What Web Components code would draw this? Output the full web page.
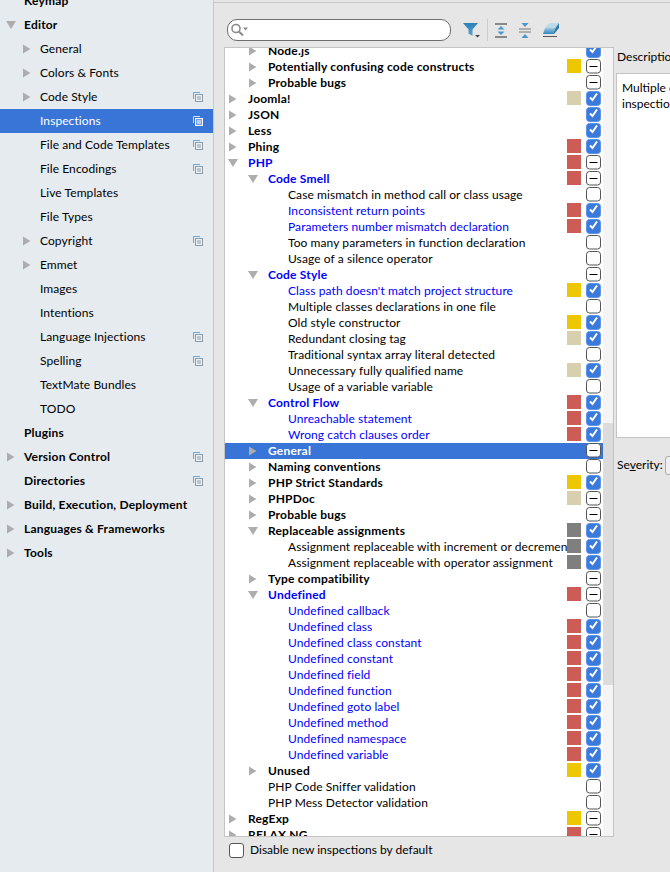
<!DOCTYPE html>
<html><head><meta charset="utf-8"><style>
html,body{margin:0;padding:0;height:872px;overflow:hidden;background:#e6e6e6}
</style></head><body>
<settings-app></settings-app>
<script>
const ARROW_R='<svg width="10" height="10" viewBox="0 0 10 10"><path d="M1 .5v9l7.500-4.500z" fill="#adadad"/></svg>';
const ARROW_D='<svg width="10" height="10" viewBox="0 0 10 10"><path d="M0 1h10l-5 8z" fill="#adadad"/></svg>';
const copyIcon=(sel)=>`<svg width="10" height="10" viewBox="0 0 10 10" fill="none"><path d="M.5 7V.5H7" stroke="${sel?'#cfe0f7':'#6aa7d6'}"/><rect x="2.500" y="2.500" width="7" height="7" fill="#fff" fill-opacity=".3" stroke="${sel?'#fff':'#8c9aa3'}"/><path d="M4 5h4M4 7h4" stroke="${sel?'#fff':'#8c9aa3'}"/></svg>`;

class NavRow extends HTMLElement{
  connectedCallback(){
    const d=+this.getAttribute('depth')||0,a=this.getAttribute('arrow'),b=this.hasAttribute('bold'),s=this.hasAttribute('selected'),c=this.hasAttribute('copy');
    this.attachShadow({mode:'open'}).innerHTML=`<style>
    :host{display:flex;align-items:center;height:24px;padding-left:${6+d*16}px;padding-right:10px;box-sizing:border-box;background:${s?'#3875d7':'transparent'};color:${s?'#fff':'#000'};font-weight:${b?700:400};letter-spacing:${b?'.2px':'.08px'}}
    .a{width:18px;display:flex}.t{flex:1;white-space:nowrap}.c{display:flex}</style>
    <span class="a">${a==='r'?ARROW_R:a==='d'?ARROW_D:''}</span><span class="t"><slot></slot></span><span class="c">${c?copyIcon(s):''}</span>`;
  }
}
customElements.define('nav-row',NavRow);

class SideBar extends HTMLElement{
  connectedCallback(){
    const R=[['Keymap',0,'',1,0],['Editor',0,'d',1,0],['General',1,'r'],['Colors & Fonts',1,'r'],['Code Style',1,'r',0,1],['Inspections',1,'',0,1,1],['File and Code Templates',1,'',0,1],['File Encodings',1,'',0,1],['Live Templates',1,''],['File Types',1,''],['Copyright',1,'r',0,1],['Emmet',1,'r'],['Images',1,''],['Intentions',1,''],['Language Injections',1,'',0,1],['Spelling',1,'',0,1],['TextMate Bundles',1,''],['TODO',1,''],['Plugins',0,'',1],['Version Control',0,'r',1,1],['Directories',0,'',1,1],['Build, Execution, Deployment',0,'r',1],['Languages & Frameworks',0,'r',1],['Tools',0,'r',1]];
    const s=this.attachShadow({mode:'open'});
    s.innerHTML=`<style>:host{display:block;width:214px;flex:none;height:872px;box-sizing:border-box;background:#e6ebf0;border-right:1px solid #c9c9c9;overflow:hidden}
    .w{margin-top:-11px}</style><div class="w">${R.map(r=>`<nav-row depth="${r[1]}" arrow="${r[2]||''}" ${r[3]?'bold':''} ${r[4]?'copy':''} ${r[5]?'selected':''}>${r[0].replace('&','&amp;')}</nav-row>`).join('')}</div>`;
  }
}
customElements.define('side-bar',SideBar);

class CheckBox extends HTMLElement{
  connectedCallback(){
    const k=this.getAttribute('state');
    const on=k==='on';
    const inner=on?'<path d="M4 6.500l2.500 2.500 4.500-6.500" fill="none" stroke="#fff" stroke-width="2"/>':k==='mix'?'<path d="M3.500 7.500h8" stroke="#000" stroke-width="1"/>':'';
    const box=on?'<rect x=".5" y=".5" width="14" height="14" rx="3" fill="#3c79dc" stroke="#5a95e8"/>':'<rect x=".5" y=".5" width="14" height="13.500" rx="3" fill="#fff" stroke="#555"/>';
    this.attachShadow({mode:'open'}).innerHTML=`<style>:host{display:flex;width:15px;height:15px}</style>
    <svg width="15" height="15" viewBox="0 0 15 15">${box}${inner}</svg>`;
  }
}
customElements.define('check-box',CheckBox);

class TreeRow extends HTMLElement{
  connectedCallback(){
    const d=+this.getAttribute('depth')||0,a=this.getAttribute('arrow')||'',b=this.hasAttribute('bold'),m=this.hasAttribute('mod'),s=this.hasAttribute('selected'),c=this.getAttribute('sev')||'',k=this.getAttribute('check');
    this.attachShadow({mode:'open'}).innerHTML=`<style>
    :host{display:flex;align-items:center;height:16px;padding-left:${3+d*20}px;background:${s?'#3875d7':'transparent'};color:${s?'#fff':m?'#0000ff':'#000'};font-weight:${b?700:400};letter-spacing:${b?'.2px':'.08px'};white-space:nowrap}
    .a{width:20px;flex:none;display:flex}.t{flex:1;overflow:hidden}
    .s{width:14px;height:14px;flex:none;align-self:flex-start;margin-right:5px;background:${c||'transparent'}}
    check-box{flex:none;align-self:flex-start;margin-right:2px}</style>
    <span class="a">${a==='r'?ARROW_R:a==='d'?ARROW_D:''}</span><span class="t"><slot></slot></span><span class="s"></span><check-box state="${k}"></check-box>`;
  }
}
customElements.define('tree-row',TreeRow);

class InspectionTree extends HTMLElement{
  connectedCallback(){
    const Y='#edc800',T='#d8cfae',E='#cd5c57',G='#7f7f7f';
    const R=[
    ['Node.js',1,'r','b','','on'],['Potentially confusing code constructs',1,'r','b',Y,'mix'],['Probable bugs',1,'r','b','','mix'],
    ['Joomla!',0,'r','b',T,'on'],['JSON',0,'r','b','','on'],['Less',0,'r','b','','on'],['Phing',0,'r','b',E,'on'],
    ['PHP',0,'d','bm',E,'mix'],['Code Smell',1,'d','bm',E,'mix'],
    ['Case mismatch in method call or class usage',2,'','','','off'],['Inconsistent return points',2,'','m',E,'on'],['Parameters number mismatch declaration',2,'','m',E,'on'],['Too many parameters in function declaration',2,'','','','off'],['Usage of a silence operator',2,'','','','off'],
    ['Code Style',1,'d','bm','','mix'],['Class path doesn\'t match project structure',2,'','m',Y,'on'],['Multiple classes declarations in one file',2,'','','','off'],['Old style constructor',2,'','',Y,'on'],['Redundant closing tag',2,'','',T,'on'],['Traditional syntax array literal detected',2,'','','','off'],['Unnecessary fully qualified name',2,'','',T,'on'],['Usage of a variable variable',2,'','','','off'],
    ['Control Flow',1,'d','bm',E,'on'],['Unreachable statement',2,'','m',E,'on'],['Wrong catch clauses order',2,'','m',E,'on'],
    ['General',1,'r','bs','','mix'],['Naming conventions',1,'r','b','','off'],['PHP Strict Standards',1,'r','b',Y,'on'],['PHPDoc',1,'r','b',T,'mix'],['Probable bugs',1,'r','b','','mix'],
    ['Replaceable assignments',1,'d','b',G,'on'],['Assignment replaceable with increment or decrement',2,'','',G,'on'],['Assignment replaceable with operator assignment',2,'','',G,'on'],
    ['Type compatibility',1,'r','b','','mix'],['Undefined',1,'d','bm',E,'mix'],
    ['Undefined callback',2,'','m','','off'],['Undefined class',2,'','m',E,'on'],['Undefined class constant',2,'','m',E,'on'],['Undefined constant',2,'','m',E,'on'],['Undefined field',2,'','m',E,'on'],['Undefined function',2,'','m',E,'on'],['Undefined goto label',2,'','m',E,'on'],['Undefined method',2,'','m',E,'on'],['Undefined namespace',2,'','m',E,'on'],['Undefined variable',2,'','m',E,'on'],
    ['Unused',1,'r','b',Y,'on'],['PHP Code Sniffer validation',1,'','','','off'],['PHP Mess Detector validation',1,'','','','off'],
    ['RegExp',0,'r','b',Y,'mix'],['RELAX NG',0,'r','b',E,'mix']];
    this.attachShadow({mode:'open'}).innerHTML=`<style>
    :host{display:flex;height:790px;box-sizing:border-box;border:1px solid #c4c4c4;background:#fff;overflow:hidden}
    .list{flex:1;min-width:0;margin-top:-5px}
    .bar{width:10px;flex:none;background:#f4f4f4;display:flex;flex-direction:column}
    .thumb{margin-top:375px;height:262px;background:#dcdcdc}</style>
    <div class="list">${R.map(r=>`<tree-row depth="${r[1]}" arrow="${r[2]}" ${r[3].includes('b')?'bold':''} ${r[3].includes('m')?'mod':''} ${r[3].includes('s')?'selected':''} sev="${r[4]}" check="${r[5]}">${r[0]}</tree-row>`).join('')}</div>
    <div class="bar"><div class="thumb"></div></div>`;
  }
}
customElements.define('inspection-tree',InspectionTree);

class SearchBox extends HTMLElement{
  connectedCallback(){
    this.attachShadow({mode:'open'}).innerHTML=`<style>:host{display:flex;align-items:center;width:224px;height:22px;box-sizing:border-box;border:1px solid #6e6e6e;border-radius:10px;background:#fff;padding-left:2px}</style>
    <svg width="20" height="16" viewBox="0 0 20 16" fill="none"><circle cx="6" cy="6.500" r="4" stroke="#8a8a8a" stroke-width="1.600"/><path d="M9 9.500l4 4" stroke="#8a8a8a" stroke-width="2"/><path d="M13 5.500h5l-2.500 3z" fill="#8a8a8a"/></svg>`;
  }
}
customElements.define('search-box',SearchBox);

class ToolBar extends HTMLElement{
  connectedCallback(){
    this.attachShadow({mode:'open'}).innerHTML=`<style>:host{display:flex;align-items:center;height:30px;padding-left:3px}
    svg{display:block}.sep{width:1px;height:22px;background:#ccc;margin:0 7px 0 6px}
    .g{display:flex;gap:12px}</style>
    <search-box></search-box>
    <svg width="18" height="16" viewBox="0 0 18 16" style="margin-left:12px"><defs><linearGradient id="bg" x1="0" y1="0" x2="0" y2="1"><stop offset="0" stop-color="#2d7fb8"/><stop offset="1" stop-color="#5ba4d4"/></linearGradient></defs><path d="M0 1h15L9.500 7.500V14l-4-2.500V7.500z" fill="url(#bg)"/><path d="M12 13h5l-2.500 2.500z" fill="#444"/></svg>
    <span class="sep"></span>
    <div class="g">
    <svg width="12" height="15" viewBox="0 0 12 15"><path d="M0 0h12v2H0zM0 13h12v2H0z" fill="#888"/><path d="M2.500 6.500L6 3l3.500 3.500zM2.500 8.500L6 12l3.500-3.500z" fill="#4a97cc"/></svg>
    <svg width="12" height="15" viewBox="0 0 12 15"><path d="M0 5.500h12v1H0zM0 8.500h12v1H0z" fill="#777"/><path d="M2.500 0h7L6 4zM2.500 15h7L6 11z" fill="#4a97cc"/></svg>
    <svg width="16" height="15" viewBox="0 0 16 15"><defs><linearGradient id="eg" x1="0" y1="0" x2="0" y2="1"><stop offset="0" stop-color="#9fcbe6"/><stop offset="1" stop-color="#2f84ba"/></linearGradient></defs><path d="M4 2.500L7 0h9l-3.500 5H2z" fill="#bcd9ea"/><path d="M2 5h10.500L10 11H0z" fill="url(#eg)"/><path d="M12.500 5L16 0v5l-5 6h-1z" fill="#2f78a8"/><path d="M0 13.500h14" stroke="#555"/></svg>
    </div>`;
  }
}
customElements.define('tool-bar',ToolBar);

class DescPanel extends HTMLElement{
  connectedCallback(){
    this.attachShadow({mode:'open'}).innerHTML=`<style>:host{display:flex;flex-direction:column;flex:none;width:80px;white-space:nowrap}
    .l{height:20px;line-height:20px;padding-left:1px}
    .b{height:365px;margin-top:6px;border:1px solid #c4c4c4;background:#fff;padding:6px 5px;line-height:16px;box-sizing:border-box;overflow:hidden;width:80px}
    .s{display:flex;align-items:center;margin-top:17px;height:20px;padding-left:1px}
    .n{width:48px;flex:none}
    .k{width:20px;height:19px;box-sizing:border-box;border:1px solid #aaa;border-radius:3px;background:#efefef}
    u{text-decoration-thickness:1px}</style>
    <div class="l">Description</div>
    <div class="b">Multiple classes<br>inspection</div>
    <div class="s"><span class="n">Se<u>v</u>erity:</span><span class="k"></span></div>`;
  }
}
customElements.define('desc-panel',DescPanel);

class SettingsApp extends HTMLElement{
  connectedCallback(){
    this.attachShadow({mode:'open'}).innerHTML=`<style>
    :host{display:flex;width:670px;height:872px;overflow:hidden;font:12px/16px Lato,sans-serif;color:#000;background:#e6e6e6}
    .main{flex:1;min-width:0;display:flex;flex-direction:column;border-top:1px solid #c9c9c9;padding:12px 0 0 10px;margin-top:2px;box-sizing:border-box;height:870px}
    .row{display:flex;gap:2px;margin-top:2px}
    inspection-tree{width:390px;flex:none}
    .foot{display:flex;align-items:center;gap:6px;height:20px;margin-top:3px;margin-left:5px}
    .cb{width:15px;height:15px;box-sizing:border-box;border:1px solid #555;border-radius:3px;background:#fff;flex:none}
    .col{display:flex;flex-direction:column}</style>
    <side-bar></side-bar>
    <div class="main"><tool-bar></tool-bar>
    <div class="row"><div class="col"><inspection-tree></inspection-tree><div class="foot"><span class="cb"></span><span>Disable new inspections by default</span></div></div><desc-panel></desc-panel></div></div>`;
  }
}
customElements.define('settings-app',SettingsApp);
</script></body></html>
